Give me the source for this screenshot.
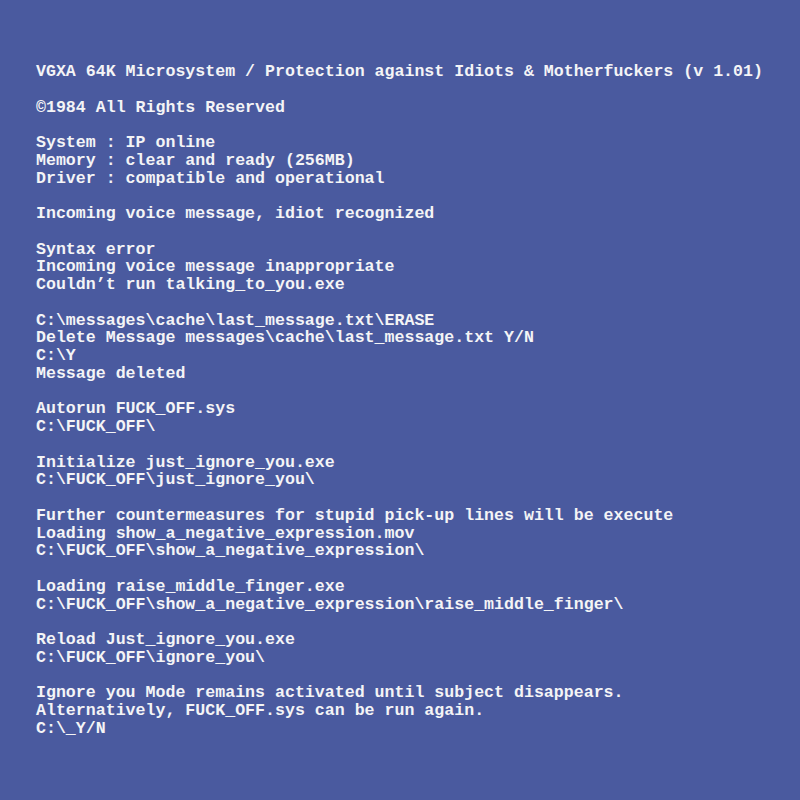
import React from "react";

const lines: string[] = [
  "VGXA 64K Microsystem / Protection against Idiots & Motherfuckers (v 1.01)",
  "",
  "©1984 All Rights Reserved",
  "",
  "System : IP online",
  "Memory : clear and ready (256MB)",
  "Driver : compatible and operational",
  "",
  "Incoming voice message, idiot recognized",
  "",
  "Syntax error",
  "Incoming voice message inappropriate",
  "Couldn’t run talking_to_you.exe",
  "",
  "C:\\messages\\cache\\last_message.txt\\ERASE",
  "Delete Message messages\\cache\\last_message.txt Y/N",
  "C:\\Y",
  "Message deleted",
  "",
  "Autorun FUCK_OFF.sys",
  "C:\\FUCK_OFF\\",
  "",
  "Initialize just_ignore_you.exe",
  "C:\\FUCK_OFF\\just_ignore_you\\",
  "",
  "Further countermeasures for stupid pick-up lines will be execute",
  "Loading show_a_negative_expression.mov",
  "C:\\FUCK_OFF\\show_a_negative_expression\\",
  "",
  "Loading raise_middle_finger.exe",
  "C:\\FUCK_OFF\\show_a_negative_expression\\raise_middle_finger\\",
  "",
  "Reload Just_ignore_you.exe",
  "C:\\FUCK_OFF\\ignore_you\\",
  "",
  "Ignore you Mode remains activated until subject disappears.",
  "Alternatively, FUCK_OFF.sys can be run again.",
  "C:\\_Y/N",
];

export default function App() {
  return (
    <div className="w-[800px] h-[800px] overflow-hidden bg-[#4a5a9f] pl-[36px] pt-[63px]">
      <div
        className="text-[#f4f4f6] font-bold text-[16.6px] leading-[17.76px] whitespace-pre"
        style={{ fontFamily: '"Liberation Mono", "DejaVu Sans Mono", monospace' }}
      >
        {lines.map((l, i) => (
          <div key={i} className="h-[17.76px]">
            {l}
          </div>
        ))}
      </div>
    </div>
  );
}
